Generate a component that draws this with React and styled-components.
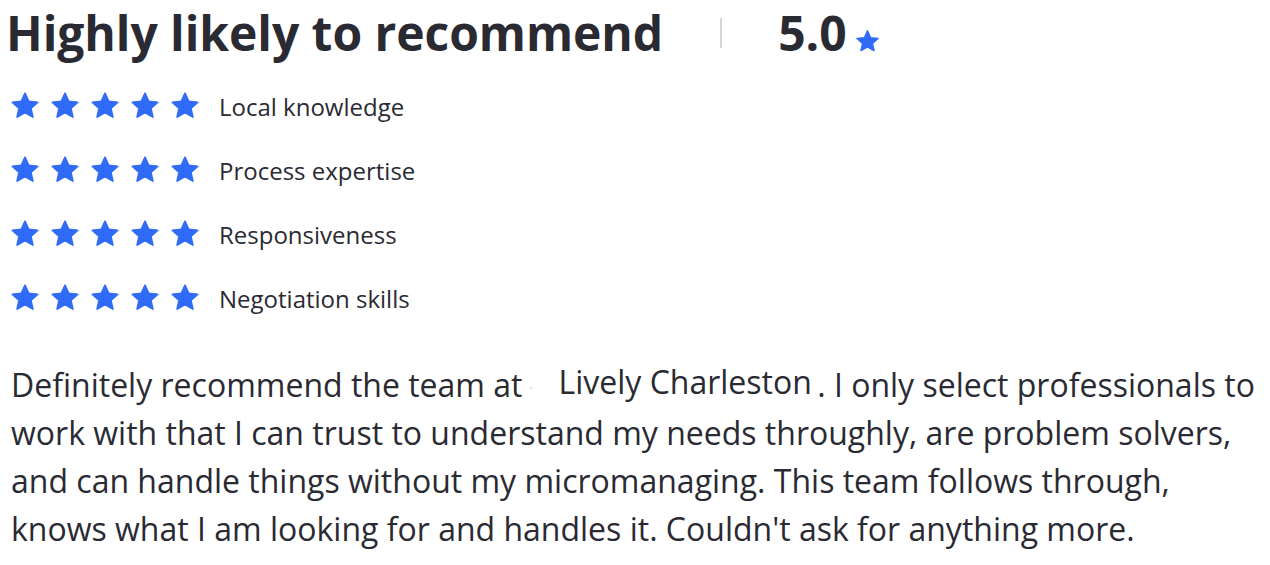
import React from "react";
import styled, { createGlobalStyle } from "styled-components";

const Global = createGlobalStyle`
  body {
    margin: 0;
    background: #fff;
    font-family: "Open Sans", "Liberation Sans", sans-serif;
    color: #2a2a33;
  }
`;

const Wrap = styled.div`
  padding: 0 8px 0 6px;
`;

const Header = styled.div`
  display: flex;
  align-items: center;
  height: 66px;
`;

const Title = styled.h2`
  margin: 0;
  font-size: 48px;
  font-weight: 700;
  line-height: 1;
  letter-spacing: -0.05px;
  color: #2a2a33;
`;

const Divider = styled.div`
  width: 2px;
  height: 30px;
  background: #d6d6da;
  margin: 0 56px 0 57px;
`;

const Score = styled.span`
  font-size: 48px;
  font-weight: 700;
  line-height: 1;
`;

const ScoreStar = styled.span`
  display: flex;
  margin: 17px 0 0 8px;
`;

const List = styled.div`
  display: flex;
  flex-direction: column;
  gap: 30px;
  margin-top: 23px;
  padding-left: 4px;
`;

const Row = styled.div`
  display: flex;
  align-items: center;
  height: 34px;
`;

const Stars = styled.div`
  display: flex;
  gap: 10px;
  margin-right: 19px;
`;

const Label = styled.span`
  font-size: 24px;
  color: #2a2a33;
`;

const Review = styled.p`
  margin: 46px 0 0 5px;
  font-size: 32px;
  line-height: 48px;
  color: #2a2a33;
  max-width: 1260px;
`;

const Dot = styled.span`
  display: inline-block;
  width: 2px;
  height: 2px;
  background: #ddd;
  margin: 0 26px 0 8px;
  vertical-align: middle;
`;

const Business = styled.span`
  position: relative;
  top: -3px;
  margin-right: -3px;
`;

const Star = ({ size = 30 }) => (
  <svg width={size} height={size} viewBox="0 0 24 24">
    <path
      d="M12 1.8l2.95 6.55 7.15.7-5.4 4.78 1.57 7.02L12 17.2l-6.27 3.65 1.57-7.02-5.4-4.78 7.15-.7z"
      fill="#2f6bf6"
      stroke="#2f6bf6"
      strokeWidth="1.4"
      strokeLinejoin="round"
    />
  </svg>
);

const categories = [
  "Local knowledge",
  "Process expertise",
  "Responsiveness",
  "Negotiation skills",
];

export default function App() {
  return (
    <Wrap>
      <Global />
      <Header>
        <Title>Highly likely to recommend</Title>
        <Divider />
        <Score>5.0</Score>
        <ScoreStar>
          <Star size={25} />
        </ScoreStar>
      </Header>
      <List>
        {categories.map((c) => (
          <Row key={c}>
            <Stars>
              {[0, 1, 2, 3, 4].map((i) => (
                <Star key={i} />
              ))}
            </Stars>
            <Label>{c}</Label>
          </Row>
        ))}
      </List>
      <Review>
        Definitely recommend the team at<Dot />
        <Business>Lively Charleston</Business> . I only select professionals to
        work with that I can trust to understand my needs throughly, are
        problem solvers, and can handle things without my micromanaging. This
        team follows through, knows what I am looking for and handles it.
        Couldn't ask for anything more.
      </Review>
    </Wrap>
  );
}
